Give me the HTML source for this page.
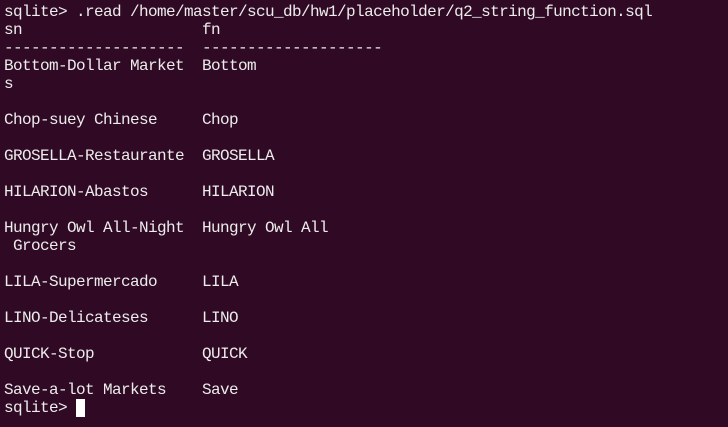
<!DOCTYPE html>
<html><head><style>
html,body{margin:0;padding:0;background:#300a24;width:728px;height:427px;overflow:hidden}
pre{position:absolute;left:4px;top:3px;margin:0;font-family:"Liberation Mono","DejaVu Sans Mono",monospace;font-size:16px;letter-spacing:-0.6px;line-height:18px;color:#ececec}
.c{background:#fff;color:#300a24}
</style></head><body><pre>sqlite&gt; .read /home/master/scu_db/hw1/placeholder/q2_string_function.sql
sn                    fn
--------------------  --------------------
Bottom-Dollar Market  Bottom
s

Chop-suey Chinese     Chop

GROSELLA-Restaurante  GROSELLA

HILARION-Abastos      HILARION

Hungry Owl All-Night  Hungry Owl All
 Grocers

LILA-Supermercado     LILA

LINO-Delicateses      LINO

QUICK-Stop            QUICK

Save-a-lot Markets    Save
sqlite&gt; <span class="c"> </span></pre></body></html>
